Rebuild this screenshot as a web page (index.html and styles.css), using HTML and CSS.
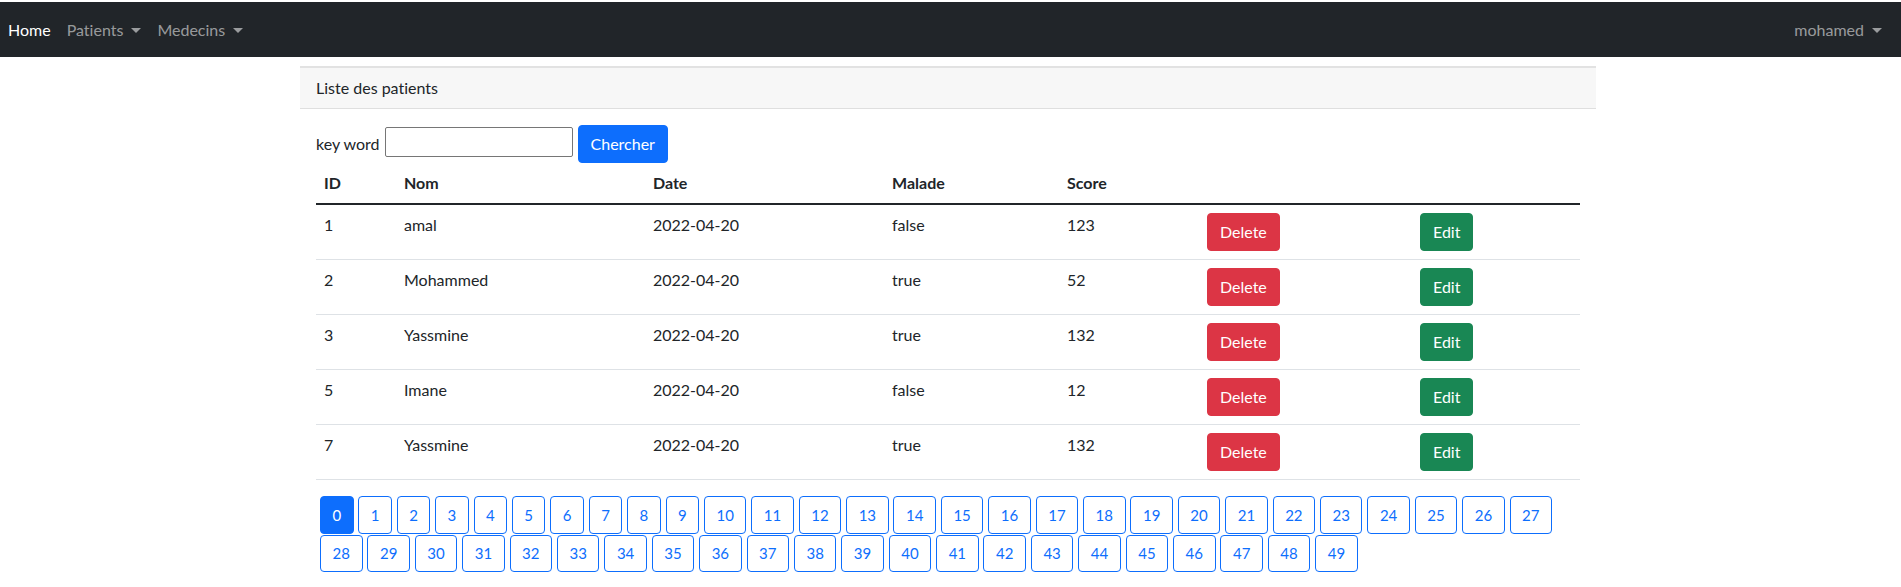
FILE: index.html
```html
<!DOCTYPE html>
<html lang="fr">
<head>
<meta charset="utf-8">
<title>Patients</title>
<link rel="stylesheet" href="styles.css">
</head>
<body>
<nav class="navbar">
  <ul class="nav-group">
    <li><a class="nav-link active" href="#">Home</a></li>
    <li><a class="nav-link dropdown" href="#">Patients</a></li>
    <li><a class="nav-link dropdown" href="#">Medecins</a></li>
  </ul>
  <ul class="nav-group nav-right">
    <li><a class="nav-link dropdown" href="#">mohamed</a></li>
  </ul>
</nav>

<main class="container">
  <section class="card">
    <div class="card-header">Liste des patients</div>
    <div class="card-body">
      <form class="search">
        <label class="search-label">key word</label>
        <input class="search-input" type="text">
        <button class="btn btn-primary" type="button">Chercher</button>
      </form>
      <table class="table">
        <colgroup>
          <col class="c-id"><col class="c-nom"><col class="c-date"><col class="c-malade"><col class="c-score"><col class="c-del"><col class="c-edit">
        </colgroup>
        <thead>
          <tr><th>ID</th><th>Nom</th><th>Date</th><th>Malade</th><th>Score</th><th></th><th></th></tr>
        </thead>
        <tbody>
          <tr><td>1</td><td>amal</td><td>2022-04-20</td><td>false</td><td>123</td><td><a class="btn btn-danger" href="#">Delete</a></td><td><a class="btn btn-success" href="#">Edit</a></td></tr>
          <tr><td>2</td><td>Mohammed</td><td>2022-04-20</td><td>true</td><td>52</td><td><a class="btn btn-danger" href="#">Delete</a></td><td><a class="btn btn-success" href="#">Edit</a></td></tr>
          <tr><td>3</td><td>Yassmine</td><td>2022-04-20</td><td>true</td><td>132</td><td><a class="btn btn-danger" href="#">Delete</a></td><td><a class="btn btn-success" href="#">Edit</a></td></tr>
          <tr><td>5</td><td>Imane</td><td>2022-04-20</td><td>false</td><td>12</td><td><a class="btn btn-danger" href="#">Delete</a></td><td><a class="btn btn-success" href="#">Edit</a></td></tr>
          <tr><td>7</td><td>Yassmine</td><td>2022-04-20</td><td>true</td><td>132</td><td><a class="btn btn-danger" href="#">Delete</a></td><td><a class="btn btn-success" href="#">Edit</a></td></tr>
        </tbody>
      </table>
      <ul class="pages">
        <li><a class="page w1 current" href="#">0</a></li>
        <li><a class="page w1" href="#">1</a></li>
        <li><a class="page w1" href="#">2</a></li>
        <li><a class="page w1" href="#">3</a></li>
        <li><a class="page w1" href="#">4</a></li>
        <li><a class="page w1" href="#">5</a></li>
        <li><a class="page w1" href="#">6</a></li>
        <li><a class="page w1" href="#">7</a></li>
        <li><a class="page w1" href="#">8</a></li>
        <li><a class="page w1" href="#">9</a></li>
        <li><a class="page w2" href="#">10</a></li>
        <li><a class="page w2" href="#">11</a></li>
        <li><a class="page w2" href="#">12</a></li>
        <li><a class="page w2" href="#">13</a></li>
        <li><a class="page w2" href="#">14</a></li>
        <li><a class="page w2" href="#">15</a></li>
        <li><a class="page w2" href="#">16</a></li>
        <li><a class="page w2" href="#">17</a></li>
        <li><a class="page w2" href="#">18</a></li>
        <li><a class="page w2" href="#">19</a></li>
        <li><a class="page w2" href="#">20</a></li>
        <li><a class="page w2" href="#">21</a></li>
        <li><a class="page w2" href="#">22</a></li>
        <li><a class="page w2" href="#">23</a></li>
        <li><a class="page w2" href="#">24</a></li>
        <li><a class="page w2" href="#">25</a></li>
        <li><a class="page w2" href="#">26</a></li>
        <li><a class="page w2" href="#">27</a></li>
        <li><a class="page w2" href="#">28</a></li>
        <li><a class="page w2" href="#">29</a></li>
        <li><a class="page w2" href="#">30</a></li>
        <li><a class="page w2" href="#">31</a></li>
        <li><a class="page w2" href="#">32</a></li>
        <li><a class="page w2" href="#">33</a></li>
        <li><a class="page w2" href="#">34</a></li>
        <li><a class="page w2" href="#">35</a></li>
        <li><a class="page w2" href="#">36</a></li>
        <li><a class="page w2" href="#">37</a></li>
        <li><a class="page w2" href="#">38</a></li>
        <li><a class="page w2" href="#">39</a></li>
        <li><a class="page w2" href="#">40</a></li>
        <li><a class="page w2" href="#">41</a></li>
        <li><a class="page w2" href="#">42</a></li>
        <li><a class="page w2" href="#">43</a></li>
        <li><a class="page w2" href="#">44</a></li>
        <li><a class="page w2" href="#">45</a></li>
        <li><a class="page w2" href="#">46</a></li>
        <li><a class="page w2" href="#">47</a></li>
        <li><a class="page w2" href="#">48</a></li>
        <li><a class="page w2" href="#">49</a></li>
      </ul>
    </div>
  </section>
</main>
</body>
</html>
```

FILE: styles.css
```css
* { box-sizing: border-box; }

html, body {
  margin: 0;
  padding: 0;
  background: #fff;
}

body {
  font-family: Lato, "Open Sans", "Liberation Sans", sans-serif;
  font-size: 16px;
  line-height: 24px;
  color: #212529;
  padding-top: 2px;
  font-variant-ligatures: none;
}

a { text-decoration: none; }

/* Navbar */
.navbar {
  height: 55px;
  background: #212529;
  display: flex;
  align-items: center;
  justify-content: space-between;
  padding: 0 11px 0 0;
}

.nav-group {
  list-style: none;
  margin: 0;
  padding: 0;
  display: flex;
}

.nav-link {
  display: block;
  padding: 8px;
  color: rgba(255, 255, 255, 0.55);
}

.nav-link.active { color: #fff; }

.nav-link.dropdown::after {
  content: "";
  display: inline-block;
  margin-left: 8px;
  vertical-align: 3px;
  border-top: 5px solid;
  border-left: 5px solid transparent;
  border-right: 5px solid transparent;
  border-bottom: 0;
}

/* Layout */
.container {
  width: 1296px;
  margin: 9px 0 0 300px;
}

.card-header {
  border-top: 2px solid #e2e2e2;
  border-bottom: 1px solid #dfdfdf;
  background: #f7f7f7;
  padding: 8px 16px;
}

.card-body {
  padding: 16px;
}

/* Search form */
.search {
  display: flex;
  align-items: center;
  gap: 5px;
  margin: 0;
}

.search-input {
  width: 188px;
  height: 30px;
  margin-bottom: 4px;
  border: 1px solid #767676;
  border-radius: 2px;
  font: inherit;
  padding: 0 4px;
}

/* Buttons */
.btn {
  display: inline-block;
  font-family: inherit;
  font-size: 16px;
  line-height: 24px;
  padding: 6px 12px;
  border: 1px solid transparent;
  border-radius: 4px;
  color: #fff;
  cursor: pointer;
}

.btn-primary { background: #0d6efd; border-color: #0d6efd; }
.btn-danger { background: #dc3545; border-color: #dc3545; }
.btn-success { background: #198754; border-color: #198754; }

/* Table */
.table {
  width: 1264px;
  border-collapse: collapse;
  table-layout: fixed;
  margin: 0 0 16px;
}

.c-id { width: 80px; }
.c-nom { width: 249px; }
.c-date { width: 239px; }
.c-malade { width: 175px; }
.c-score { width: 140px; }
.c-del { width: 213px; }
.c-edit { width: 168px; }

.table th,
.table td {
  padding: 8px;
  text-align: left;
  vertical-align: top;
}

.table th {
  font-weight: 700;
  border-bottom: 2px solid #212529;
}

.table td {
  border-bottom: 1px solid #dee2e6;
}

/* Pagination */
.pages {
  list-style: none;
  margin: 0 0 0 4px;
  padding: 0;
  display: flex;
  flex-wrap: wrap;
  gap: 1px 4.9px;
  width: 1260px;
}

.page {
  height: 37.5px;
  display: flex;
  align-items: center;
  justify-content: center;
  border: 1px solid #0d6efd;
  border-radius: 4px;
  color: #0d6efd;
  font-size: 15px;
}

.page.w1 { width: 33.5px; }
.page.w2 { width: 42.5px; }

.page.current {
  background: #0d6efd;
  color: #fff;
}
```
